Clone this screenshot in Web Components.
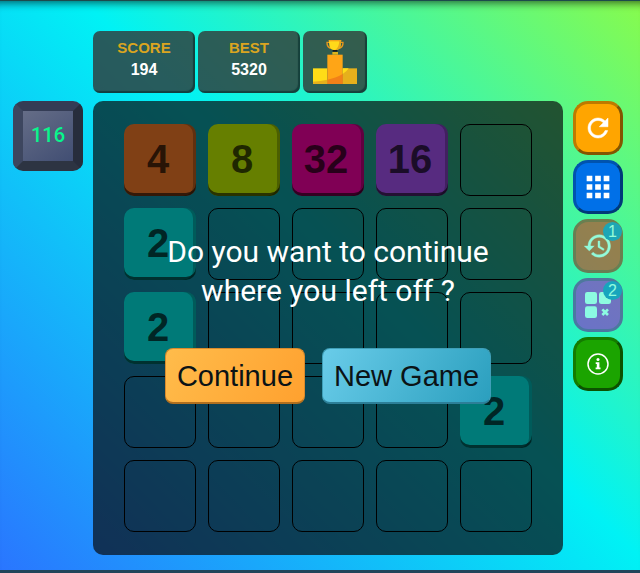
<!DOCTYPE html>
<html lang="en">
<head>
<meta charset="utf-8">
<title>Number tiles</title>
<style>
  html, body { margin: 0; }
  body { font-family: "Liberation Sans", Arial, sans-serif; }
</style>
</head>
<body>
<game-app></game-app>

<template id="app-tpl">
  <style>
    :host {
      box-sizing: border-box; display: flex; flex-direction: column; gap: 8px;
      min-height: 100vh; padding: 30px 17px 15px 13px;
      border-top: 1px solid #1d4a4c; border-bottom: 3px solid #21445a;
      background: linear-gradient(45deg, #2a75ff, #00f2f5 54%, #88fb4c) border-box;
      box-shadow: inset 0 10px 8px -8px rgba(0, 0, 0, .6);
    }
    .stats { display: flex; gap: 3px; margin-left: 80px; }
    .play { display: grid; grid-template-columns: 70px 1fr 50px; gap: 10px; align-items: start; }
    nav { display: grid; gap: 5px; }
  </style>
  <header class="stats">
    <score-card label="SCORE">194</score-card>
    <score-card label="BEST">5320</score-card>
    <podium-button></podium-button>
  </header>
  <main class="play">
    <game-timer>116</game-timer>
    <game-board values="4,8,32,16,,2,,,,,2,,,,,,,,,2,,,,,">
      <continue-prompt>Do you want to continue<br>where you left off ?</continue-prompt>
    </game-board>
    <nav aria-label="Game controls">
      <tool-button label="Restart" style="--face:#ffa500;--lit:#bd7a00;--dark:#835500">
        <svg width="30" height="30" viewBox="0 0 24 24" fill="currentColor" stroke="currentColor" stroke-width=".4"><path d="M17.65 6.35C16.2 4.9 14.21 4 12 4c-4.42 0-7.99 3.58-7.99 8s3.57 8 7.99 8c3.73 0 6.84-2.55 7.73-6h-2.08c-.82 2.33-3.04 4-5.65 4-3.31 0-6-2.69-6-6s2.69-6 6-6c1.66 0 3.14.69 4.22 1.78L13 11h7V4l-2.35 2.35z"/></svg>
      </tool-button>
      <tool-button label="Grid size" style="--face:#0070e8;--lit:#0053ae;--dark:#003a79">
        <svg width="34" height="34" viewBox="0 0 24 24" fill="currentColor"><path d="M4 8h4V4H4v4zm6 12h4v-4h-4v4zm-6 0h4v-4H4v4zm0-6h4v-4H4v4zm6 0h4v-4h-4v4zm6-10v4h4V4h-4zm-6 4h4V4h-4v4zm6 6h4v-4h-4v4zm0 6h4v-4h-4v4z"/></svg>
      </tool-button>
      <tool-button label="Undo" badge="1" style="--face:#c8321a;--lit:#84301c;--dark:#84301c">
        <svg width="30" height="30" viewBox="0 0 24 24" fill="currentColor" stroke="currentColor" stroke-width=".3"><path d="M13 3c-4.97 0-9 4.03-9 9H1l3.89 3.89.07.14L9 12H6c0-3.87 3.13-7 7-7s7 3.13 7 7-3.13 7-7 7c-1.93 0-3.68-.79-4.94-2.06l-1.42 1.42C8.27 19.99 10.51 21 13 21c4.97 0 9-4.03 9-9s-4.03-9-9-9zm-1 5v5l4.28 2.54.72-1.21-3.5-2.08V8H12z"/></svg>
      </tool-button>
      <tool-button label="Remove tile" badge="2" style="--face:#961ecb;--lit:#5e2690;--dark:#5e2690">
        <svg width="26" height="26" viewBox="0 0 78 78" fill="currentColor"><rect width="36" height="36" rx="7"/><rect x="42" width="36" height="36" rx="7"/><rect y="43" width="36" height="35" rx="7"/><path d="M52 52l17 17M69 52L52 69" stroke="currentColor" stroke-width="8"/></svg>
      </tool-button>
      <tool-button label="About" style="--face:#1ba400;--lit:#147b00;--dark:#0c5200">
        <svg width="22" height="22" viewBox="0 0 22 22" fill="currentColor"><circle cx="11" cy="11" r="10" fill="none" stroke="currentColor" stroke-width="1.5"/><circle cx="11" cy="6.5" r="1.5"/><path d="M8.7 9.2h3.7v5.4h1.1v1.7H8.6v-1.7h1.2v-3.7H8.7z"/></svg>
      </tool-button>
    </nav>
  </main>
</template>

<template id="score-tpl">
  <style>
    :host {
      box-sizing: border-box; display: flex; flex-direction: column; align-items: center;
      width: 102px; height: 62px; padding-top: 7px; border-radius: 7px;
      background: rgba(50, 50, 50, .78);
      box-shadow: inset -2px -2px 1px rgba(0, 40, 40, .55);
      color: #fff; font-weight: bold; font-size: 16px; line-height: 24px;
    }
    .label { color: #daa520; font-size: 15px; line-height: 20px; }
  </style>
  <span class="label"></span>
  <slot></slot>
</template>

<template id="podium-tpl">
  <style>
    :host { display: block; }
    button {
      display: grid; place-items: center; width: 64px; height: 62px; padding: 0;
      border: 0; border-radius: 7px; background: rgba(50, 50, 50, .78);
      box-shadow: inset -2px -2px 1px rgba(0, 40, 40, .55);
    }
  </style>
  <button aria-label="Leaderboard">
    <svg width="44" height="44" viewBox="0 0 132 132">
      <path d="M0 85h43v47H0z" fill="#ffdc17"/>
      <path d="M89 85h43v47H89z" fill="#e6b01c"/>
      <path d="M43 44h46v88H43z" fill="#ffa516"/>
      <path d="M0 132v-7q23-1 43-6v13z" fill="#e6b01c"/>
      <path d="M43 119q29-6 46-17v30H43z" fill="#f28018"/>
      <path d="M89 102q12-7 18-17H89z" fill="#ffdc17"/>
      <path d="M48 7h-6q-1 17 14 18M84 7h6q1 17-14 18" fill="none" stroke="#e8971c" stroke-width="4"/>
      <path d="M48 0h36v8q-1 21-14 22h-8Q49 29 48 8z" fill="#ffd91a"/>
      <path d="M67 30h3q13-1 14-22V0h-5q0 22-12 30z" fill="#e6a71c"/>
      <path d="M47 0h38v4H47z" fill="#f0a51c"/>
      <path d="M59 30h14v5H59z" fill="#181818"/>
      <path d="M58 36h17v8H58z" fill="#ddb41c"/>
    </svg>
  </button>
</template>

<template id="timer-tpl">
  <style>
    :host {
      box-sizing: border-box; display: grid; place-items: center; width: 70px; height: 70px;
      border: 10px solid; border-color: #343c55 #272d3c #2d3442 #3d465f; border-radius: 10px;
      background: linear-gradient(145deg, #656d87, #414e73) padding-box, #2d3442;
    }
    output { color: #08f68c; font: 500 20px/28px Roboto, sans-serif; padding-bottom: 2px; }
  </style>
  <output aria-label="Seconds"><slot></slot></output>
</template>

<template id="board-tpl">
  <style>
    :host { display: block; position: relative; padding: 23px 0; border-radius: 10px; background: rgba(8, 8, 12, .69); }
    .grid { display: grid; grid-template-columns: repeat(5, 72px); gap: 12px; justify-content: center; }
    ::slotted(continue-prompt) { position: absolute; inset: 0; }
  </style>
  <div class="grid"></div>
  <slot></slot>
</template>

<template id="tile-tpl">
  <style>
    :host {
      box-sizing: border-box; display: grid; place-items: center; height: 72px;
      border: 1px solid #000; border-radius: 10px;
      color: rgba(0, 0, 0, .7); font-weight: bold; font-size: 40px; line-height: 40px;
    }
    :host([value]) {
      border: 0; padding: 0 4px 2px 0; background: var(--tile);
      box-shadow: inset 0 -3px 0 rgba(0, 0, 0, .6), inset -3px 0 0 rgba(0, 0, 0, .25);
    }
    :host([value="2"]) { --tile: #007a78; }
    :host([value="4"]) { --tile: #804015; }
    :host([value="8"]) { --tile: #667f00; }
    :host([value="16"]) { --tile: #572b80; }
    :host([value="32"]) { --tile: #800055; }
  </style>
  <span></span>
</template>

<template id="prompt-tpl">
  <style>
    :host {
      box-sizing: border-box; display: flex; flex-direction: column; align-items: center;
      gap: 38px; padding-top: 131px;
    }
    p { margin: 0; color: #fff; font: 30px/39px Roboto, sans-serif; text-align: center; }
    .actions { display: flex; gap: 17px; }
    button {
      box-sizing: border-box; height: 56px; padding: 0 11px; border-radius: 8px;
      font: 29px/32px "Liberation Sans", Arial, sans-serif; color: #0b1316; white-space: nowrap;
    }
    .go { border: 1px solid #d98a2c; border-bottom: 2px solid #b06f1f; background: linear-gradient(120deg, #ffbc4b, #ffa12f); }
    .new { border: 1px solid #3f9fb8; border-bottom: 2px solid #2c7f98; background: linear-gradient(120deg, #69cce9, #2b9fbe); }
  </style>
  <p><slot></slot></p>
  <div class="actions">
    <button class="go">Continue</button>
    <button class="new">New Game</button>
  </div>
</template>

<template id="tool-tpl">
  <style>
    :host { display: block; position: relative; }
    :host([badge]) { opacity: .6; }
    button {
      box-sizing: border-box; display: grid; place-items: center; width: 50px; height: 54px; padding: 0;
      border: 3px solid; border-color: var(--lit) var(--dark) var(--dark) var(--lit);
      border-radius: 15px; background: var(--face); color: #fff;
    }
    :host([badge]) button { color: #c8ffff; }
    .badge {
      position: absolute; top: 3px; right: 1px; width: 19px; height: 19px; border-radius: 50%;
      background: #0071c8; color: #c8ffff; font: 16px/19px "Liberation Sans", Arial, sans-serif; text-align: center;
    }
    .badge[hidden] { display: none; }
  </style>
  <button><slot></slot></button>
  <span class="badge" hidden></span>
</template>

<script>
  class Base extends HTMLElement {
    constructor() {
      super();
      const tpl = document.getElementById(this.constructor.tpl);
      this.attachShadow({ mode: 'open' }).append(tpl.content.cloneNode(true));
    }
  }
  const define = (name, tpl, connected) => customElements.define(name, class extends Base {
    static tpl = tpl;
    connectedCallback() { if (connected) connected(this, this.shadowRoot); }
  });

  define('number-tile', 'tile-tpl', (el, root) => {
    root.querySelector('span').textContent = el.getAttribute('value') || '';
  });
  define('score-card', 'score-tpl', (el, root) => {
    root.querySelector('.label').textContent = el.getAttribute('label');
  });
  define('podium-button', 'podium-tpl');
  define('game-timer', 'timer-tpl');
  define('continue-prompt', 'prompt-tpl');
  define('tool-button', 'tool-tpl', (el, root) => {
    root.querySelector('button').setAttribute('aria-label', el.getAttribute('label'));
    const badge = root.querySelector('.badge');
    if (el.hasAttribute('badge')) {
      badge.textContent = el.getAttribute('badge');
      badge.hidden = false;
    }
  });
  define('game-board', 'board-tpl', (el, root) => {
    const tiles = el.getAttribute('values').split(',').slice(0, 25).map(value => {
      const tile = document.createElement('number-tile');
      if (value) tile.setAttribute('value', value);
      return tile;
    });
    root.querySelector('.grid').replaceChildren(...tiles);
  });
  define('game-app', 'app-tpl');
</script>
</body>
</html>
